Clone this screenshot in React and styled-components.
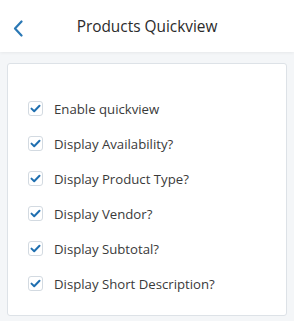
import React from 'react';
import styled, { createGlobalStyle } from 'styled-components';

const GlobalStyle = createGlobalStyle`
  html, body {
    margin: 0;
    padding: 0;
    background: #f4f6f8;
    font-family: "Open Sans", "Liberation Sans", sans-serif;
  }
`;

const Page = styled.div`
  width: 294px;
  height: 321px;
  display: flex;
  flex-direction: column;
  background: #f4f6f8;
`;

const Header = styled.div`
  height: 52px;
  display: flex;
  align-items: center;
  justify-content: center;
  position: relative;
  background: #fff;
  box-shadow: 0 1px 3px rgba(0, 0, 0, 0.06);
`;

const BackButton = styled.button`
  position: absolute;
  left: 9px;
  top: 18px;
  width: 18px;
  height: 20px;
  padding: 0;
  border: 0;
  background: none;
  display: flex;
  align-items: center;
  justify-content: center;
`;

const Title = styled.h1`
  margin: 1px 0 0 0;
  font-size: 15.4px;
  font-weight: 400;
  color: #2b2b2b;
`;

const Body = styled.div`
  flex: 1;
  padding: 11px 7px 5px 7px;
  display: flex;
`;

const Card = styled.div`
  flex: 1;
  background: #fff;
  border: 1px solid #dde2e7;
  border-radius: 3px;
  padding: 36px 20px 0 20px;
  display: flex;
  flex-direction: column;
  gap: 18px;
`;

const Row = styled.label`
  display: flex;
  align-items: center;
  gap: 11px;
  height: 17px;
  font-size: 13.2px;
  color: #3a3a3a;
`;

const Box = styled.span`
  width: 15px;
  height: 15px;
  box-sizing: border-box;
  border: 1px solid #d3dae1;
  border-radius: 3px;
  background: #fff;
  display: flex;
  align-items: center;
  justify-content: center;
`;

const items = [
  'Enable quickview',
  'Display Availability?',
  'Display Product Type?',
  'Display Vendor?',
  'Display Subtotal?',
  'Display Short Description?',
];

const Check = () => (
  <Box>
    <svg width="11" height="9" viewBox="0 0 11 9">
      <path d="M1.5 4.6 L4.2 7.2 L9.5 1.8" fill="none" stroke="#1f6fb0" strokeWidth="2" strokeLinecap="round" strokeLinejoin="round" />
    </svg>
  </Box>
);

export default function App() {
  return (
    <Page>
      <GlobalStyle />
      <Header>
        <BackButton>
          <svg width="10" height="17" viewBox="0 0 10 17">
            <path d="M8.5 1.5 L2 8.5 L8.5 15.5" fill="none" stroke="#2a78b5" strokeWidth="2.2" strokeLinecap="round" strokeLinejoin="round" />
          </svg>
        </BackButton>
        <Title>Products Quickview</Title>
      </Header>
      <Body>
        <Card>
          {items.map((t) => (
            <Row key={t}>
              <Check />
              {t}
            </Row>
          ))}
        </Card>
      </Body>
    </Page>
  );
}
